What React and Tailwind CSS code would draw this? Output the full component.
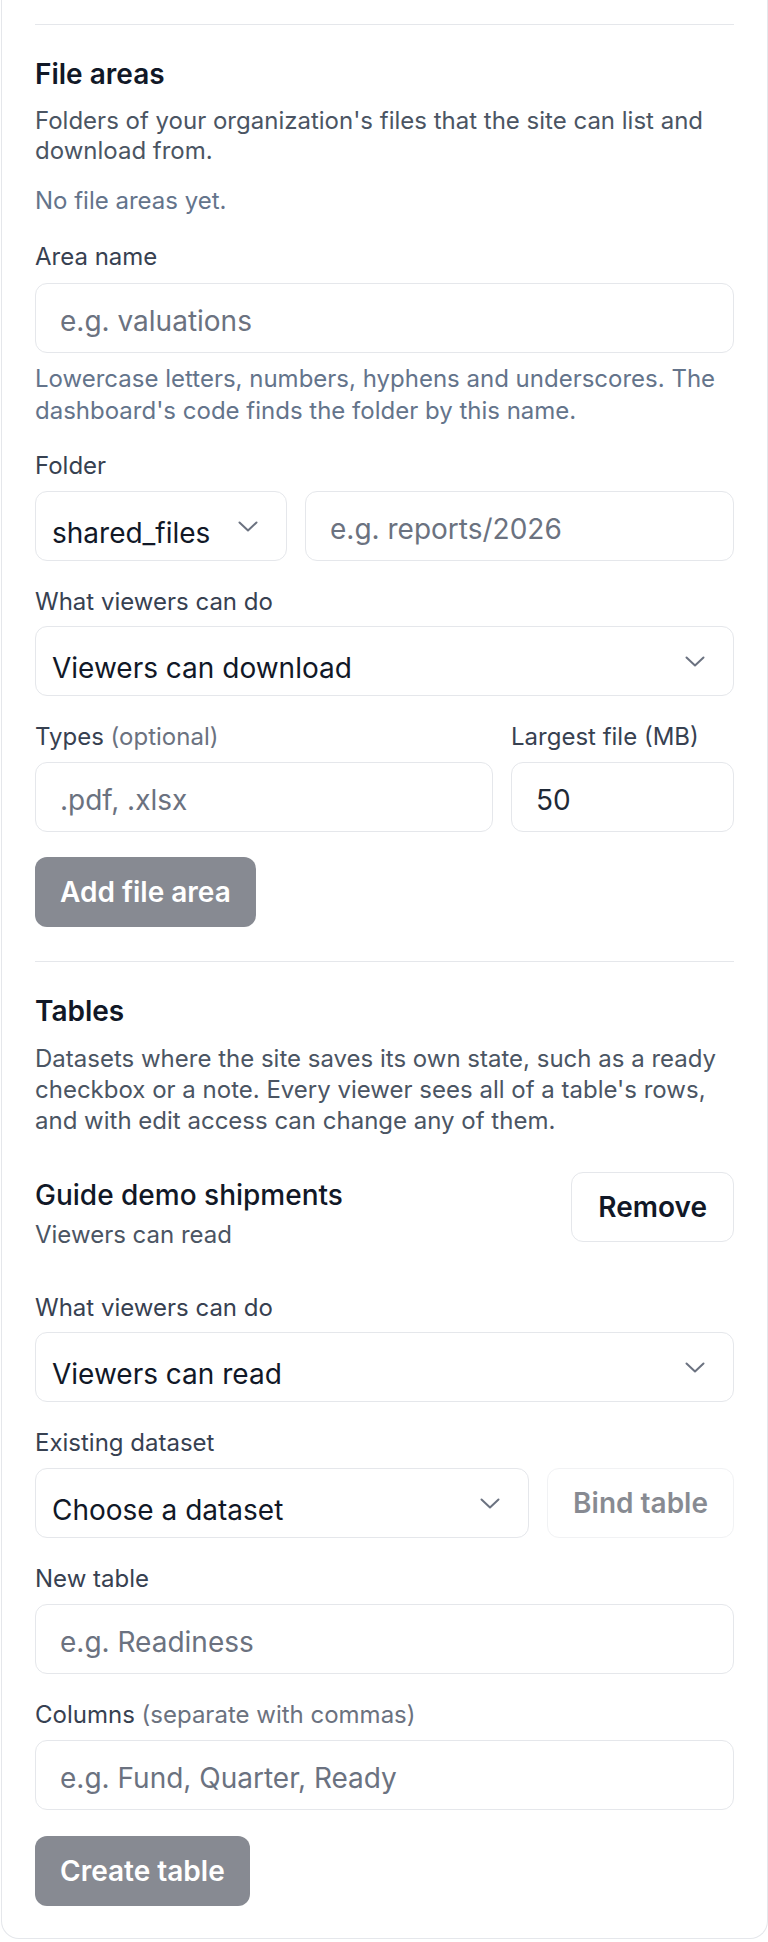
import React from "react";

function Chevron() {
  return (
    <svg width="20" height="11" viewBox="0 0 20 11" fill="none" className="shrink-0 text-[#6b7280]">
      <path d="M1.5 1.5 10 9.5l8.5-8" stroke="currentColor" strokeWidth="2" strokeLinecap="round" strokeLinejoin="round" />
    </svg>
  );
}

function Label({ children, className = "" }) {
  return <p className={`text-[24px] leading-[30px] text-[#374151] ${className}`}>{children}</p>;
}

function TextInput({ placeholder, value, className = "" }) {
  return (
    <input
      className={`h-[70px] min-w-0 rounded-[12px] border border-[#e5e7eb] bg-white px-[24px] pt-[6px] text-[28px] text-[#1f2937] outline-none placeholder:text-[#6b7280] ${className}`}
      placeholder={placeholder}
      defaultValue={value}
    />
  );
}

function SelectBox({ value, className = "" }) {
  return (
    <div className={`flex h-[70px] items-center justify-between rounded-[12px] border border-[#e5e7eb] bg-white pl-[16px] pr-[28px] ${className}`}>
      <span className="pt-[13px] text-[28px] leading-[34px] text-[#111827]">{value}</span>
      <Chevron />
    </div>
  );
}

function Divider({ className = "" }) {
  return <div className={`h-px bg-[#e5e7eb] ${className}`} />;
}

export default function App() {
  return (
    <div className="min-h-screen bg-white pl-[1px] font-[Inter,sans-serif]">
      <div className="rounded-b-[18px] border-x border-b border-[#e5e7eb] px-[33px] pb-[32px] pt-[24px]">
        <Divider />

        <h2 className="mt-[31px] text-[28px] leading-[36px] font-semibold text-[#111827]">File areas</h2>
        <p className="mt-[14px] text-[24px] leading-[30px] text-[#4b5563]">
          Folders of your organization's files that the site can list and download from.
        </p>
        <p className="mt-[20px] text-[24px] leading-[30px] text-[#64748b]">No file areas yet.</p>

        <Label className="mt-[26px]">Area name</Label>
        <TextInput className="mt-[11px] w-full" placeholder="e.g. valuations" />
        <p className="mt-[10px] text-[24px] leading-[32px] text-[#64748b]">
          Lowercase letters, numbers, hyphens and underscores. The dashboard's code finds the folder by this name.
        </p>

        <Label className="mt-[24px]">Folder</Label>
        <div className="mt-[10px] flex gap-[18px]">
          <SelectBox className="w-[252px] shrink-0" value="shared_files" />
          <TextInput className="flex-1" placeholder="e.g. reports/2026" />
        </div>

        <Label className="mt-[26px]">What viewers can do</Label>
        <SelectBox className="mt-[9px]" value="Viewers can download" />

        <div className="mt-[26px] flex gap-[18px]">
          <Label className="flex-1">
            Types <span className="text-[#6b7280]">(optional)</span>
          </Label>
          <Label className="w-[223px] shrink-0">Largest file (MB)</Label>
        </div>
        <div className="mt-[10px] flex gap-[18px]">
          <TextInput className="flex-1" placeholder=".pdf, .xlsx" />
          <TextInput className="w-[223px] shrink-0" value="50" />
        </div>

        <button className="mt-[25px] h-[70px] rounded-[12px] bg-[#111827] px-[25px] text-[28px] font-semibold text-white opacity-50">
          Add file area
        </button>

        <Divider className="mt-[34px]" />

        <h2 className="mt-[31px] text-[28px] leading-[36px] font-semibold text-[#111827]">Tables</h2>
        <p className="mt-[14px] text-[24px] leading-[31px] text-[#4b5563]">
          Datasets where the site saves its own state, such as a ready checkbox or a note. Every viewer sees all of a table's rows, and with edit access can change any of them.
        </p>

        <div className="mt-[36px] flex items-start justify-between">
          <div className="pt-[5px]">
            <p className="text-[28px] leading-[36px] font-medium text-[#111827]">Guide demo shipments</p>
            <p className="mt-[7px] text-[24px] leading-[30px] text-[#4b5563]">Viewers can read</p>
          </div>
          <button className="h-[70px] rounded-[12px] border border-[#e5e7eb] bg-white px-[26px] text-[28px] font-semibold text-[#111827]">
            Remove
          </button>
        </div>

        <Label className="mt-[43px]">What viewers can do</Label>
        <SelectBox className="mt-[9px]" value="Viewers can read" />

        <Label className="mt-[26px]">Existing dataset</Label>
        <div className="mt-[10px] flex gap-[18px]">
          <SelectBox className="flex-1" value="Choose a dataset" />
          <button className="h-[70px] shrink-0 rounded-[12px] border border-[#e5e7eb] bg-white px-[25px] text-[28px] font-semibold text-[#111827] opacity-50">
            Bind table
          </button>
        </div>

        <Label className="mt-[26px]">New table</Label>
        <TextInput className="mt-[10px] w-full" placeholder="e.g. Readiness" />

        <Label className="mt-[26px]">
          Columns <span className="text-[#6b7280]">(separate with commas)</span>
        </Label>
        <TextInput className="mt-[10px] w-full" placeholder="e.g. Fund, Quarter, Ready" />

        <button className="mt-[26px] h-[70px] rounded-[12px] bg-[#111827] px-[25px] text-[28px] font-semibold text-white opacity-50">
          Create table
        </button>
      </div>
    </div>
  );
}
